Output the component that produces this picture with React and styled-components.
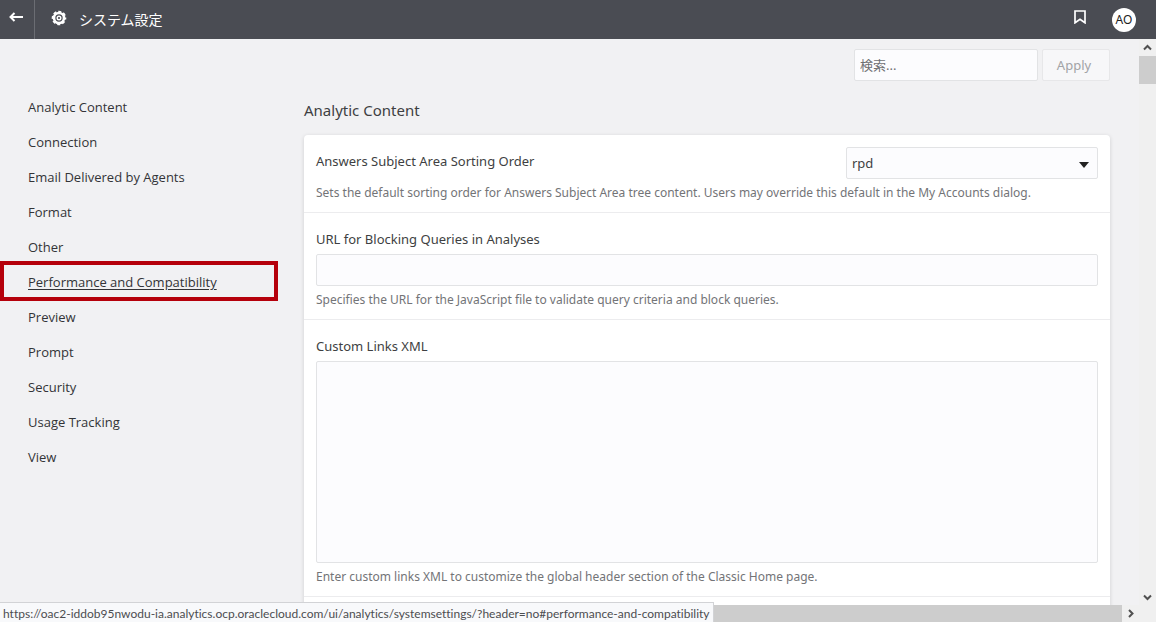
import React from "react"
import styled, { createGlobalStyle, css } from "styled-components"

const GlobalStyle = createGlobalStyle`
  * {
    box-sizing: border-box;
  }

  body {
    margin: 0;
    color: #3e3f42;
    background: #f1f1f3;
    font-family: "Noto Sans", "Noto Sans CJK JP", sans-serif;
    font-size: 13px;
  }

  button,
  input,
  select,
  textarea {
    font: inherit;
    color: inherit;
  }
`

const Page = styled.div`
  position: relative;
  display: flex;
  flex-direction: column;
  height: 100vh;
  overflow: hidden;
`

const TopBar = styled.header`
  display: flex;
  flex: none;
  height: 39px;
  padding-right: 20px;
  color: #fff;
  background: #4a4c53;
`

const BarButton = styled.button`
  display: grid;
  place-items: center;
  width: 34px;
  height: 34px;
  padding: 0;
  border: 0;
  color: inherit;
  background: none;
`

const BackCell = styled.div`
  border-right: 1px solid #6b6d73;
`

const Title = styled.h1`
  display: flex;
  flex: 1;
  align-items: center;
  gap: 12px;
  margin: 0;
  padding-left: 16px;
  font-family: "Noto Sans CJK JP", sans-serif;
  font-size: 14px;
  font-weight: 400;
  line-height: 39px;

  svg {
    margin-bottom: 4px;
  }
`

const Avatar = styled.button`
  align-self: center;
  width: 24px;
  height: 24px;
  margin-left: 15px;
  padding: 0;
  border: 0;
  border-radius: 50%;
  color: #222;
  background: #fff;
  font-size: 12px;
  line-height: 24px;
`

const Viewport = styled.div`
  display: grid;
  grid-template-columns: 1fr 17px;
  grid-template-rows: 1fr 17px;
  flex: 1;
  min-height: 0;
`

const Content = styled.div`
  display: flex;
  gap: 26px;
  min-width: 0;
  min-height: 0;
  padding-right: 29px;
  overflow: hidden;
`

const Sidebar = styled.nav`
  flex: none;
  width: 278px;
  padding-top: 51px;
`

const NavLink = styled.a`
  position: relative;
  display: block;
  padding-left: 28px;
  color: #333437;
  font-family: "Open Sans", sans-serif;
  font-size: 13px;
  font-weight: 500;
  line-height: 35px;
  text-decoration: none;

  ${({ $marked }) =>
    $marked &&
    css`
      text-decoration: underline;
      text-underline-offset: 2px;

      &::after {
        position: absolute;
        inset: -4px 0 -1px;
        border: 4px solid #b5000b;
        content: "";
      }
    `}
`

const Main = styled.main`
  flex: 1;
  min-width: 0;
`

const Toolbar = styled.form`
  display: flex;
  justify-content: flex-end;
  gap: 4px;
  padding-top: 10px;
`

const fieldStyles = css`
  display: block;
  width: 100%;
  height: 32px;
  padding: 0 5px;
  border: 1px solid #e2e3e5;
  border-radius: 2px;
  background: #fcfcfe;
`

const TextInput = styled.input`
  ${fieldStyles}
`

const SearchInput = styled.input`
  ${fieldStyles}
  width: 184px;

  &::placeholder {
    color: #6f7073;
    opacity: 1;
  }
`

const ApplyButton = styled.button`
  width: 68px;
  height: 32px;
  padding: 0 4px 0 0;
  border: 1px solid #e7e7e9;
  border-radius: 2px;
  background: #f7f7f9;

  &:disabled {
    color: #a2a3a6;
  }
`

const TextArea = styled.textarea`
  ${fieldStyles}
  height: 202px;
  resize: none;
`

const SelectBox = styled.div`
  position: relative;
  width: 252px;

  svg {
    position: absolute;
    top: 15px;
    right: 9px;
    pointer-events: none;
  }
`

const Select = styled.select`
  ${fieldStyles}
  appearance: none;
`

const SectionTitle = styled.h2`
  margin: 17px 0 13px;
  font-size: 15px;
  font-weight: 400;
  line-height: 24px;
`

const Card = styled.section`
  border-radius: 4px;
  background: #fff;
  box-shadow: 0 1px 4px rgba(0, 0, 0, 0.14);
`

const Setting = styled.div`
  padding: 12px 12px 9px;
  border-bottom: 1px solid #ececee;
`

const SettingHead = styled.div`
  display: flex;
  justify-content: space-between;
`

const Label = styled.label`
  display: block;
  font-size: 13px;
  line-height: 29px;
`

const Help = styled.p`
  margin: 4px 0 0;
  color: #737477;
  font-size: 12px;
  line-height: 20px;
`

const ScrollTrack = styled.div`
  display: flex;
  flex-direction: ${({ $horizontal }) => ($horizontal ? "row" : "column")};
  justify-content: space-between;
  background: #f0f0f0;
`

const ScrollButton = styled.button`
  display: grid;
  place-items: center;
  width: 17px;
  height: 17px;
  padding: 0;
  border: 0;
  color: #505050;
  background: none;
`

const ThumbY = styled.div`
  height: 28px;
  margin-bottom: auto;
  background: #cdcdcd;
`

const ThumbX = styled.div`
  flex: 1;
  margin-left: 17px;
  background: #cdcdcd;
`

const LinkStatus = styled.div`
  position: absolute;
  bottom: 0;
  left: 0;
  height: 20px;
  padding: 0 3px;
  border: 1px solid #d2d3d6;
  border-width: 1px 1px 0 0;
  color: #4c4d50;
  background: #f8f9fb;
  font-family: Lato, sans-serif;
  font-size: 12px;
  font-variant-ligatures: none;
  line-height: 21px;
  white-space: nowrap;
`

const ArrowLeft = () => (
  <svg width="16" height="10" viewBox="0 0 16 10" fill="none" stroke="currentColor" strokeWidth="2">
    <path d="M1.5 5H14M5.5 1L1.5 5l4 4" />
  </svg>
)

const Gear = () => (
  <svg width="16" height="16" viewBox="0 0 16 16" fill="none" stroke="currentColor">
    <circle cx="8" cy="8" r="5" strokeWidth="2.6" />
    <circle cx="8" cy="8" r="6.4" strokeWidth="1.8" strokeDasharray="3 2.026" strokeDashoffset="1.5" />
    <circle cx="8" cy="8" r="1.8" strokeWidth="1.4" />
  </svg>
)

const Bookmark = () => (
  <svg width="12" height="14" viewBox="0 0 12 14" fill="none" stroke="currentColor" strokeWidth="1.7">
    <path d="M1 1h10v11.8L6 9.2l-5 3.6z" />
  </svg>
)

const chevrons = {
  up: "M1 6.5L4.5 3 8 6.5",
  down: "M1 3.5L4.5 7 8 3.5",
  right: "M3 1L6.5 4.5 3 8",
}

const Chevron = ({ to }) => (
  <svg width="9" height="9" viewBox="0 0 9 9" fill="none" stroke="currentColor" strokeWidth="2">
    <path d={chevrons[to]} />
  </svg>
)

const links = [
  "Analytic Content",
  "Connection",
  "Email Delivered by Agents",
  "Format",
  "Other",
  "Performance and Compatibility",
  "Preview",
  "Prompt",
  "Security",
  "Usage Tracking",
  "View",
]

const toHash = name => "#" + name.toLowerCase().replace(/ /g, "-")

const App = () => {
  return (
    <Page>
      <GlobalStyle />
      <TopBar>
        <BackCell>
          <BarButton aria-label="Back">
            <ArrowLeft />
          </BarButton>
        </BackCell>
        <Title>
          <Gear />
          システム設定
        </Title>
        <BarButton aria-label="Bookmark">
          <Bookmark />
        </BarButton>
        <Avatar>AO</Avatar>
      </TopBar>

      <Viewport>
        <Content>
          <Sidebar>
            {links.map(name => (
              <NavLink
                key={name}
                href={toHash(name)}
                $marked={name === "Performance and Compatibility"}
              >
                {name}
              </NavLink>
            ))}
          </Sidebar>

          <Main>
            <Toolbar>
              <SearchInput type="text" placeholder="検索..." aria-label="検索" />
              <ApplyButton type="button" disabled>
                Apply
              </ApplyButton>
            </Toolbar>
            <SectionTitle>Analytic Content</SectionTitle>
            <Card>
              <Setting>
                <SettingHead>
                  <Label htmlFor="sorting">Answers Subject Area Sorting Order</Label>
                  <SelectBox>
                    <Select id="sorting" defaultValue="rpd">
                      <option value="rpd">rpd</option>
                    </Select>
                    <svg width="10" height="6" viewBox="0 0 10 6">
                      <path d="M0 0h10L5 6z" fill="#222" />
                    </svg>
                  </SelectBox>
                </SettingHead>
                <Help>
                  Sets the default sorting order for Answers Subject Area tree content. Users may
                  override this default in the My Accounts dialog.
                </Help>
              </Setting>
              <Setting>
                <Label htmlFor="blocking">URL for Blocking Queries in Analyses</Label>
                <TextInput id="blocking" type="text" />
                <Help>
                  Specifies the URL for the JavaScript file to validate query criteria and block
                  queries.
                </Help>
              </Setting>
              <Setting>
                <Label htmlFor="custom-links">Custom Links XML</Label>
                <TextArea id="custom-links" />
                <Help>
                  Enter custom links XML to customize the global header section of the Classic Home
                  page.
                </Help>
              </Setting>
              <Setting />
            </Card>
          </Main>
        </Content>

        <ScrollTrack>
          <ScrollButton aria-label="Scroll up">
            <Chevron to="up" />
          </ScrollButton>
          <ThumbY />
          <ScrollButton aria-label="Scroll down">
            <Chevron to="down" />
          </ScrollButton>
        </ScrollTrack>
        <ScrollTrack $horizontal>
          <ThumbX />
          <ScrollButton aria-label="Scroll right">
            <Chevron to="right" />
          </ScrollButton>
        </ScrollTrack>
        <ScrollTrack />
      </Viewport>

      <LinkStatus>
        https://oac2-iddob95nwodu-ia.analytics.ocp.oraclecloud.com/ui/analytics/systemsettings/?header=no#performance-and-compatibility
      </LinkStatus>
    </Page>
  )
}

export default App
